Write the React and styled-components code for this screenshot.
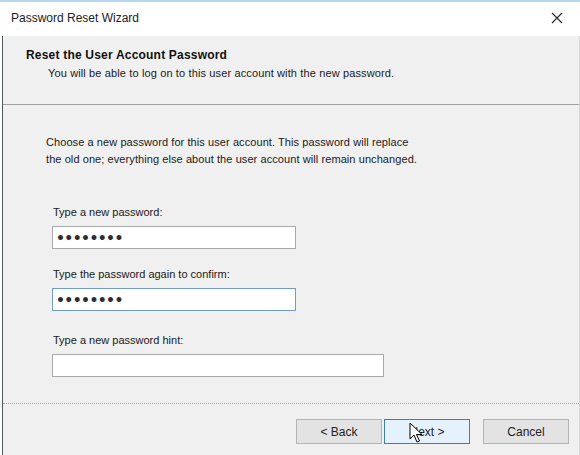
import React from 'react'
import styled, { createGlobalStyle } from 'styled-components'

const GlobalStyle = createGlobalStyle`
    html, body {
        margin: 0;
        padding: 0;
        background: #ffffff;
        overflow: hidden;
    }
    body {
        font-family: "Liberation Sans", Arial, sans-serif;
        font-size: 11px;
        color: #1a1a1a;
    }
`

const Window = styled.div`
    width: 580px;
    height: 455px;
    border-top: 2px solid #b4d6ee;
    box-sizing: border-box;
    display: flex;
    flex-direction: column;
    position: relative;
    overflow: hidden;
`
const TitleBar = styled.div`
    height: 32px;
    flex: none;
    display: flex;
    align-items: center;
    justify-content: space-between;
    padding: 0 0 2px 11px;
    background: #ffffff;
    font-size: 12px;
    color: #222;
`
const CloseButton = styled.div`
    width: 46px;
    height: 32px;
    display: flex;
    align-items: center;
    justify-content: center;
`
const Client = styled.div`
    flex: 1;
    margin-left: 2px;
    border-left: 1px solid #4f5b66;
    border-right: 1px solid #d8d8d8;
    background: #f0f0f0;
    display: flex;
    flex-direction: column;
`
const Header = styled.div`
    height: 69px;
    box-sizing: border-box;
    padding: 12px 0 0 23px;
    border-bottom: 1px solid #a0a0a0;
`
const HeaderTitle = styled.div`
    font-weight: bold;
    font-size: 12px;
    letter-spacing: 0.2px;
    line-height: 15px;
    color: #111;
`
const HeaderSub = styled.div`
    margin: 3px 0 0 22px;
    line-height: 14px;
    letter-spacing: 0.13px;
`
const Body = styled.div`
    flex: 1;
    padding: 29px 0 0 43px;
    display: flex;
    flex-direction: column;
    align-items: flex-start;
`
const Intro = styled.p`
    margin: 0;
    line-height: 17px;
    letter-spacing: 0.08px;
`
const Label = styled.label`
    display: block;
    line-height: 16px;
    margin: ${p => p.$top}px 0 6px 7px;
`
const Field = styled.input`
    box-sizing: border-box;
    width: ${p => p.$w}px;
    height: 23px;
    margin-left: 6px;
    padding: 0 0 0 3px;
    background: #ffffff;
    border: 1px solid ${p => (p.$focus ? '#6f9cc8' : '#a9a9a9')};
    font-family: "DejaVu Sans", sans-serif;
    font-weight: bold;
    font-size: 14px;
    letter-spacing: -0.6px;
    color: #2e2e2e;
    outline: none;
`
const Footer = styled.div`
    height: 52px;
    flex: none;
    border-top: 1px dotted #a6a6a6;
    display: flex;
    justify-content: flex-end;
    align-items: flex-start;
    padding: 15px 10px 0 0;
    box-sizing: border-box;
`
const Button = styled.button`
    width: 86px;
    height: 25px;
    box-sizing: border-box;
    margin-left: ${p => p.$gap}px;
    background: ${p => (p.$hover ? '#e5f1fb' : '#e3e3e3')};
    border: 1px solid ${p => (p.$hover ? '#3c7fb1' : '#b4b4b4')};
    font-family: "Liberation Sans", Arial, sans-serif;
    font-size: 12px;
    color: #222;
    padding: 0;
`
const Cursor = styled.svg`
    position: absolute;
    left: 409px;
    top: 420px;
`

const App = () => (
    <>
        <GlobalStyle />
        <Window>
            <TitleBar>
                <span>Password Reset Wizard</span>
                <CloseButton>
                    <svg width="12" height="12" viewBox="0 0 12 12">
                        <path d="M1 1L11 11M11 1L1 11" stroke="#2b2b2b" strokeWidth="1.2" />
                    </svg>
                </CloseButton>
            </TitleBar>
            <Client>
                <Header>
                    <HeaderTitle>Reset the User Account Password</HeaderTitle>
                    <HeaderSub>You will be able to log on to this user account with the new password.</HeaderSub>
                </Header>
                <Body>
                    <Intro>
                        Choose a new password for this user account. This password will replace<br />
                        the old one; everything else about the user account will remain unchanged.
                    </Intro>
                    <Label $top={36}>Type a new password:</Label>
                    <Field type="password" readOnly value="abcdefgh" $w={244} />
                    <Label $top={17}>Type the password again to confirm:</Label>
                    <Field type="password" readOnly value="abcdefgh" $w={244} $focus />
                    <Label $top={21}>Type a new password hint:</Label>
                    <Field type="text" readOnly value="" $w={332} />
                </Body>
                <Footer>
                    <Button $gap={0}>&lt; Back</Button>
                    <Button $gap={2} $hover>Next &gt;</Button>
                    <Button $gap={13}>Cancel</Button>
                </Footer>
            </Client>
            <Cursor width="14" height="22" viewBox="0 0 14 22">
                <path d="M1 1L1 17L5 13L8 20L10.5 19L7.5 12.5L13 12.5Z" fill="#ffffff" stroke="#000" strokeWidth="1" strokeLinejoin="miter" />
            </Cursor>
        </Window>
    </>
)

export default App
